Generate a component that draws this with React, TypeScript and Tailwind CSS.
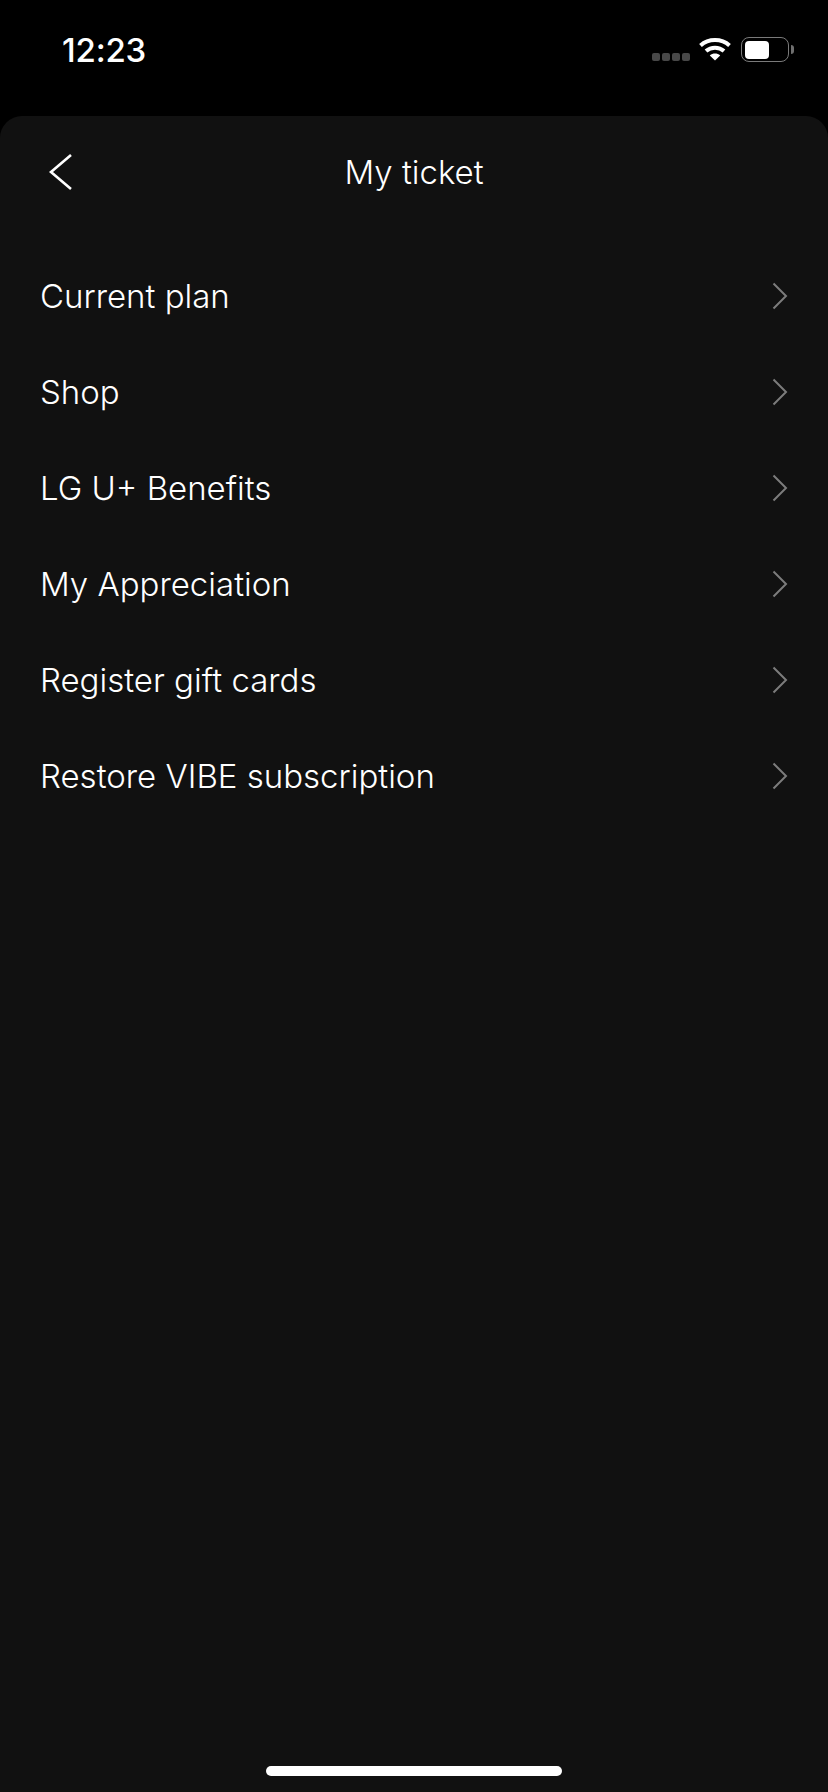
const font = "font-['Inter','Liberation_Sans',sans-serif]";

const items = [
  "Current plan",
  "Shop",
  "LG U+ Benefits",
  "My Appreciation",
  "Register gift cards",
  "Restore VIBE subscription",
];

const StatusBar = () => {
  return (
    <div className="flex h-[116px] shrink-0 items-start justify-between bg-black pt-[30px] pl-[62px] pr-[34px]">
      <span className="text-[33px] leading-[40px] font-medium tracking-[-0.2px] text-white">12:23</span>
      <div className="flex items-start pt-[7px]">
        <div className="mt-[16px] flex gap-[2px]">
          <span className="h-[8px] w-[8px] rounded-[2px] bg-[#484848]" />
          <span className="h-[8px] w-[8px] rounded-[2px] bg-[#484848]" />
          <span className="h-[8px] w-[8px] rounded-[2px] bg-[#484848]" />
          <span className="h-[8px] w-[8px] rounded-[2px] bg-[#484848]" />
        </div>
        <svg className="ml-[9px]" width="32" height="24" viewBox="0 0 32 24" fill="none" stroke="white" strokeWidth="4">
          <path d="M1.5 8.5C9.5 1.2 22.5 1.2 30.5 8.5" />
          <path d="M7 14C12 9.6 20 9.6 25 14" />
          <path d="M16 23.5L10.8 18.4C13.8 15.9 18.2 15.9 21.2 18.4Z" fill="white" stroke="none" />
        </svg>
        <div className="ml-[10px] flex items-center">
          <div className="h-[25px] w-[48px] rounded-[8px] border-[1.5px] border-[#7a7a7a] p-[2.5px]">
            <div className="h-full w-[24px] rounded-[4px] bg-white" />
          </div>
          <div className="ml-[2px] h-[9px] w-[3px] rounded-r-full bg-[#6f6f6f]" />
        </div>
      </div>
    </div>
  );
};

const Row = ({ label }: { label: string }) => {
  return (
    <div className="flex h-[96px] items-center justify-between pl-[40px] pr-[40px]">
      <span className="text-[33px] leading-[40px] font-[350] text-white">{label}</span>
      <svg width="16" height="28" viewBox="0 0 16 28" fill="none" stroke="#7c7c7c" strokeWidth="2">
        <path d="M1.5 1.5L14 14L1.5 26.5" />
      </svg>
    </div>
  );
};

export default function App() {
  return (
    <div className={`${font} flex h-[1792px] w-[828px] flex-col overflow-hidden bg-black`}>
      <StatusBar />
      <div className="relative flex flex-1 flex-col rounded-t-[22px] bg-[#111111]">
        <div className="relative flex h-[112px] items-center justify-center">
          <svg className="absolute left-[48px] top-[37px]" width="26" height="38" viewBox="0 0 26 38" fill="none" stroke="white" strokeWidth="2.6">
            <path d="M23 2L3 19L23 36" />
          </svg>
          <span className="text-[33px] leading-[40px] font-[350] text-white">My ticket</span>
        </div>
        <div className="mt-[20px] flex flex-col">
          {items.map((item) => (
            <Row key={item} label={item} />
          ))}
        </div>
        <div className="absolute bottom-[16px] left-[266px] h-[10px] w-[296px] rounded-full bg-white" />
      </div>
    </div>
  );
}
